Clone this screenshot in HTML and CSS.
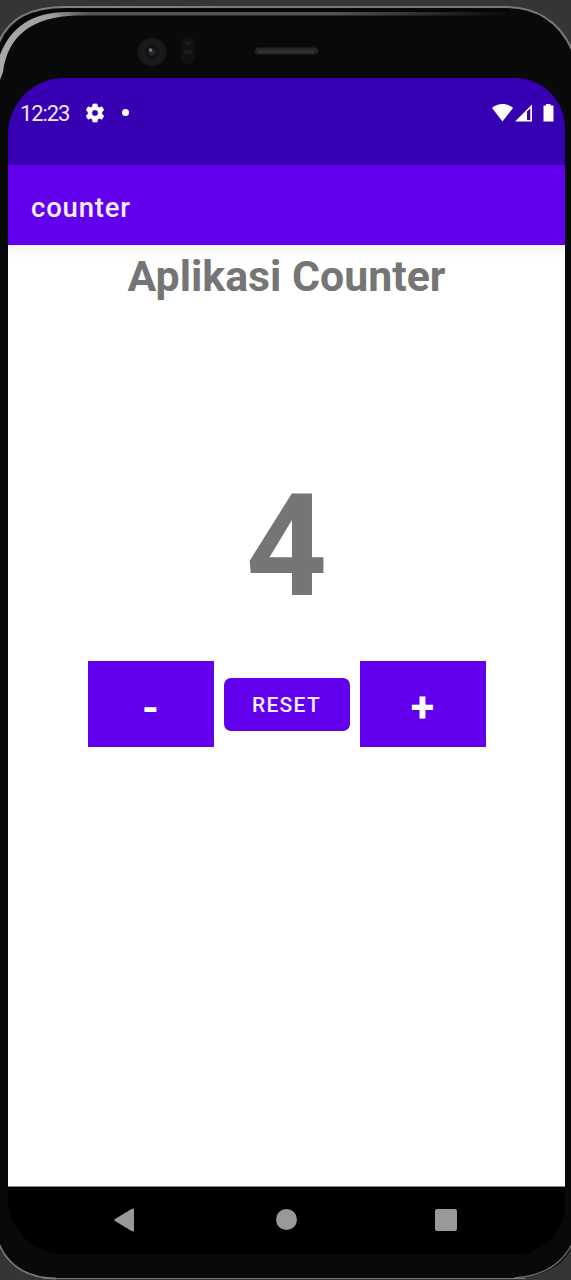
FILE: index.html
```html
<!DOCTYPE html>
<html lang="id">
<head>
<meta charset="utf-8">
<title>counter</title>
<link rel="stylesheet" href="styles.css">
</head>
<body>
<div class="device">
  <svg class="frame" width="571" height="1280" viewBox="0 0 571 1280" aria-hidden="true">
    <defs>
      <linearGradient id="rim" x1="0" x2="1" y1="0" y2="0">
        <stop offset="0" stop-color="#777"/><stop offset=".2" stop-color="#858585"/><stop offset=".4" stop-color="#777"/><stop offset="1" stop-color="#777"/>
      </linearGradient>
      <linearGradient id="inner" gradientUnits="userSpaceOnUse" x1="0" x2="510" y1="0" y2="0">
        <stop offset="0" stop-color="#aaa9a7"/><stop offset=".1" stop-color="#a0a09e"/><stop offset=".17" stop-color="#555"/><stop offset=".65" stop-color="#555"/><stop offset="1" stop-color="#09090a"/>
      </linearGradient>
      <radialGradient id="lens"><stop offset="0" stop-color="#34343d"/><stop offset=".35" stop-color="#101014"/><stop offset=".65" stop-color="#1b1b1e"/><stop offset="1" stop-color="#151517"/></radialGradient>
    </defs>
    <path fill="#09090a" d="M-2 60V44C8 20 28 7 66 7H512C546 9 562 26 573 54V1244C566 1264 546 1277 510 1279H56C28 1279 9 1267-2 1244Z"/>
    <path fill="none" stroke="url(#rim)" stroke-width="2.2" d="M-1 42C9 19 29 7 66 7H508C540 8 561 24 573 52"/>
    <path fill="none" stroke="#050505" stroke-width="2" d="M0 49C11 24 31 10.500 68 10.500H508"/>
    <path fill="url(#inner)" d="M0 80V55C10 29 30 12 68 12H510V15.500H76C34 17 8 34 3 72Z"/>
    <path fill="none" stroke="#777" stroke-width="1.800" d="M-1 1244C8 1265 25 1278 56 1278.500"/>
    <path fill="none" stroke="#666" stroke-width="1.500" d="M514 1278C544 1276 562 1264 572 1244"/>
    <path stroke="#777" d="M44 1278.500H526"/>
    <circle cx="152" cy="52" r="14.500" fill="url(#lens)"/>
    <circle cx="150.500" cy="50" r="1.700" fill="#777787"/>
    <rect x="181" y="37" width="14" height="27" rx="6" fill="#111113"/>
    <path d="M185 43h6M184 52h8" stroke="#1b1b1e" stroke-width="4"/>
    <rect x="255" y="47.500" width="63" height="7" rx="3.500" fill="#242424"/>
    <path d="M259 51.500H315" stroke="#333" stroke-width="3" stroke-dasharray="3 1"/>
  </svg>
  <main class="screen">
    <header class="status">
      <span class="clock">12:23</span>
      <svg class="gear" width="18" height="20" viewBox="0 0 18 20"><path fill="#fff" stroke="#fff" stroke-width=".7" fill-rule="evenodd" d="M7 1h4l.6 2.700 1.700 1 2.600-.9 1.900 3.300L15.800 9v2l2 1.900-1.900 3.300-2.600-.9-1.700 1L11 19H7l-.6-2.700-1.700-1-2.600.9-1.900-3.300 2-1.900V9l-2-1.900 1.900-3.300 2.600.9 1.700-1ZM9 6.700a3.300 3.300 0 1 0 0 6.600 3.300 3.300 0 0 0 0-6.600Z"/></svg>
      <span class="dot"></span>
      <svg class="signals" width="63" height="20" viewBox="0 0 63 20" fill="#fff"><path d="M0 5C6-.5 15-.5 21 5L10.500 18.500Z"/><path fill-rule="evenodd" d="M23 18.500 40 1.500v17ZM35 8.500v8.500h3.300V5.500Z"/><path d="M51.500 2.500H54V1h4.500v1.500H61.500v16h-10Z"/></svg>
    </header>
    <div class="appbar">counter</div>
    <section class="content">
      <h1 class="title">Aplikasi Counter</h1>
      <div class="count">4</div>
      <div class="controls">
        <button class="step minus">-</button>
        <button class="reset">RESET</button>
        <button class="step">+</button>
      </div>
    </section>
    <nav class="nav">
      <svg width="20" height="24" viewBox="0 0 20 24"><path fill="#999" d="M1 11 18 .8q2-1 2 1v20.400q0 2-2 1L1 13q-1.500-1 0-2Z"/></svg>
      <span class="home"></span>
      <span class="recent"></span>
    </nav>
  </main>
</div>
</body>
</html>
```
FILE: styles.css
```css
* { box-sizing: border-box; }
body { margin: 0; background: #343537; font-family: Roboto, sans-serif; }
.device { position: relative; width: 571px; height: 1280px; padding: 78px 6px 26px 8px; overflow: hidden; }
.frame { position: absolute; left: 0; top: 0; }
.screen { position: relative; height: 1176px; display: flex; flex-direction: column; border-radius: 56px 50px 50px 56px; overflow: hidden; background: #000; }
.status { height: 86.5px; flex: none; background: #3700b3; padding: 25px 10px 0 12px; display: flex; align-items: flex-start; color: #f0e6ff; }
.clock { font-size: 22px; line-height: 22px; width: 66px; letter-spacing: -1.1px; }
.dot { width: 7px; height: 7px; border-radius: 50%; background: #fff; margin: 6px 0 0 18px; }
.signals { margin-left: auto; }
.appbar { height: 80.5px; flex: none; background: #6200ee; color: #f6edff; padding: 6px 23px 0; display: flex; align-items: center; font-size: 27.5px; font-weight: 500; letter-spacing: .8px; }
.content { flex: 1; color: #757575; display: flex; flex-direction: column; align-items: center; background: linear-gradient(#f4f4f6, #fff 12px); }
.title { margin: 6px 0 0; font-size: 42.8px; line-height: 50px; font-weight: 700; white-space: nowrap; }
.count { margin-top: 163px; font-size: 142px; line-height: 166px; font-weight: 700; }
.controls { margin-top: 31px; display: flex; align-items: center; gap: 10px; }
button { border: 0; padding: 0; margin: 0; font-family: inherit; color: #fff; background: #6200ee; }
.step { width: 126px; height: 86px; font-size: 43px; font-weight: 700; padding-top: 5px; }
.minus { padding-top: 7px; }
.reset { width: 126px; height: 53px; border-radius: 7px; font-size: 21px; font-weight: 500; letter-spacing: 1.3px; color: #f6edff; padding-top: 2px; }
.nav { height: 68px; flex: none; background: #000; border-top: 1px solid #888; padding: 0 108px 2px 106px; display: flex; justify-content: space-between; align-items: center; }
.home { width: 21px; height: 21px; border-radius: 50%; background: #999; margin-left: 4px; }
.recent { width: 22px; height: 22px; border-radius: 2px; background: #999; }
```
